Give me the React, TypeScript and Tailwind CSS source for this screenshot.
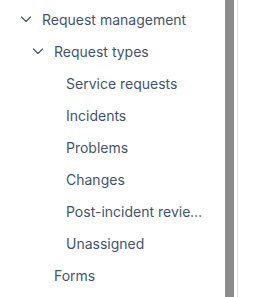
import React from 'react'

function Chevron() {
  return (
    <svg width="12" height="12" viewBox="0 0 12 12" fill="none" className="shrink-0">
      <path d="M1.5 4 L6 8.5 L10.5 4" stroke="#44546f" strokeWidth="1.1" strokeLinecap="round" strokeLinejoin="round" />
    </svg>
  )
}

interface RowProps {
  label: string
  level: number
  expandable?: boolean
}

function Row({ label, level, expandable }: RowProps) {
  const pad = level === 1 ? 'pl-[20px]' : level === 2 ? 'pl-[32px]' : 'pl-[66px]'
  return (
    <div className={`flex h-8 items-center ${pad} pr-[18px]`}>
      {expandable && (
        <span className="mr-[10px] flex w-[12px] items-center justify-center">
          <Chevron />
        </span>
      )}
      {!expandable && level === 2 && <span className="w-[22px] shrink-0" />}
      <span className="truncate">{label}</span>
    </div>
  )
}

export default function App() {
  return (
    <div className="flex h-[297px] w-[253px] bg-white" style={{ fontFamily: 'Inter, "Noto Sans", sans-serif' }}>
      <div className="w-[225px] pt-[3px] text-[14px] text-[#44546f]">
        <Row label="Request management" level={1} expandable />
        <Row label="Request types" level={2} expandable />
        <Row label="Service requests" level={3} />
        <Row label="Incidents" level={3} />
        <Row label="Problems" level={3} />
        <Row label="Changes" level={3} />
        <Row label="Post-incident reviews" level={3} />
        <Row label="Unassigned" level={3} />
        <Row label="Forms" level={2} />
      </div>
      <div className="w-[9px] bg-[#8c8c8c]" />
      <div className="w-[3px]" />
      <div className="w-px bg-[#e2e2e2]" />
    </div>
  )
}
